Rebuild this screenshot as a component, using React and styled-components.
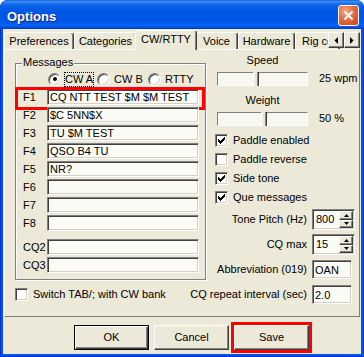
import styled, { createGlobalStyle } from "styled-components";

const GlobalStyle = createGlobalStyle`
  * { box-sizing: border-box; }
  html, body { margin: 0; padding: 0; background: #ffffff; }
  body {
    font-family: "Liberation Sans", Arial, sans-serif;
    font-size: 11px;
    color: #000000;
  }
`;

// classic 3D edges
const sunkenEdge = `
  border: 1px solid;
  border-color: #808080 #ffffff #ffffff #808080;
  box-shadow: inset 1px 1px 0 #404040, inset -1px -1px 0 #d4d0c8;
`;

const raisedEdge = `
  border: 1px solid;
  border-color: #ffffff #404040 #404040 #ffffff;
  box-shadow: inset -1px -1px 0 #808080;
`;

const Window = styled.div`
  width: 364px;
  height: 357px;
  display: flex;
  flex-direction: column;
  background: #0055e5;
  border-radius: 8px 8px 0 0;
  overflow: hidden;
  box-shadow: inset 1px 0 0 #0831d9, inset -1px 0 0 #0831d9, inset 0 -1px 0 #0831d9;
`;

const TitleBar = styled.div`
  height: 29px;
  flex: none;
  display: flex;
  align-items: flex-start;
  justify-content: space-between;
  padding: 0 5px 0 7px;
  border-radius: 8px 8px 0 0;
  background: linear-gradient(
    180deg,
    #0a5bd8 0%,
    #3d8ff7 4%,
    #2a7cf0 9%,
    #0a62e8 18%,
    #0055e3 45%,
    #0058ea 75%,
    #0a63f2 88%,
    #0049d9 96%,
    #0039bd 100%
  );
`;

const TitleText = styled.span`
  margin-top: 9px;
  color: #ffffff;
  font-weight: bold;
  font-size: 13px;
  line-height: 15px;
  text-shadow: 1px 1px 0 #0f1f8a;
`;

const CloseButton = styled.div`
  margin-top: 5px;
  width: 21px;
  height: 21px;
  border: 1px solid #ffffff;
  border-radius: 3px;
  display: flex;
  align-items: center;
  justify-content: center;
  background: radial-gradient(circle at 35% 30%, #f4ab8c 0%, #e46c43 45%, #c8401c 100%);
`;

const Client = styled.div`
  flex: 1;
  margin: 0 3px 3px;
  background: #ece9d8;
  display: flex;
  flex-direction: column;
`;

const TabStrip = styled.div`
  position: relative;
  z-index: 1;
  height: 20px;
  flex: none;
  display: flex;
  align-items: flex-end;
  padding-left: 1px;
`;

const Tab = styled.div`
  position: relative;
  z-index: ${(p) => (p.$active ? 2 : 1)};
  flex: none;
  width: ${(p) => p.$width}px;
  height: ${(p) => (p.$active ? 20 : 17)}px;
  margin: 0 ${(p) => (p.$active ? -2 : 0)}px ${(p) => (p.$active ? -1 : 0)}px;
  padding: 0 0 ${(p) => (p.$active ? 3 : 0)}px ${(p) => (p.$clip ? 6 : 0)}px;
  display: flex;
  align-items: center;
  justify-content: ${(p) => (p.$clip ? "flex-start" : "center")};
  background: #ece9d8;
  border: 1px solid;
  border-color: #ffffff #404040 transparent #ffffff;
  border-bottom: none;
  border-radius: 3px 3px 0 0;
  box-shadow: inset -1px 0 0 #808080;
  line-height: 13px;
  white-space: nowrap;
  overflow: hidden;
`;

const TabScroller = styled.div`
  position: absolute;
  z-index: 3;
  right: 1px;
  top: 3px;
  display: flex;
`;

const ScrollButton = styled.div`
  width: 16px;
  height: 16px;
  background: #ece9d8;
  ${raisedEdge}
  display: flex;
  align-items: center;
  justify-content: center;
`;

const TabPanel = styled.div`
  flex: none;
  height: 268px;
  margin: 0 1px;
  display: flex;
  flex-direction: column;
  border: 1px solid;
  border-color: #ffffff #808080 #808080 #ffffff;
`;

const TopArea = styled.div`
  height: 232px;
  flex: none;
  display: flex;
`;

const GroupBox = styled.div`
  position: relative;
  flex: none;
  width: 191px;
  height: 217px;
  margin: 13px 0 0 10px;
  padding-top: 6px;
  display: flex;
  flex-direction: column;
  border: 1px solid #808080;
  box-shadow: inset 1px 1px 0 #ffffff, 1px 1px 0 #ffffff;
`;

const GroupLegend = styled.span`
  position: absolute;
  top: -8px;
  left: 6px;
  padding: 0 1px;
  line-height: 13px;
  background: #ece9d8;
`;

const RadioRow = styled.div`
  height: 18px;
  display: flex;
  align-items: center;
  padding-left: 32px;
`;

const RadioItem = styled.div`
  flex: none;
  width: ${(p) => (p.$width ? `${p.$width}px` : "auto")};
  display: flex;
  align-items: center;
`;

const RadioCircle = styled.span`
  position: relative;
  flex: none;
  width: 13px;
  height: 13px;
  margin-right: 3px;
  border-radius: 50%;
  background: #ffffff;
  ${sunkenEdge}

  &::after {
    content: "";
    display: ${(p) => (p.$checked ? "block" : "none")};
    position: absolute;
    left: 3.5px;
    top: 3.5px;
    width: 4px;
    height: 4px;
    border-radius: 50%;
    background: #000000;
  }
`;

const RadioText = styled.span`
  line-height: 13px;
  border: 1px dotted ${(p) => (p.$focused ? "#000000" : "transparent")};
`;

const MsgRow = styled.div`
  position: relative;
  height: 18px;
  flex: none;
  display: flex;
  align-items: center;
  padding-left: 7px;
`;

const KeyLabel = styled.span`
  width: 24px;
  flex: none;
  line-height: 13px;
`;

const TextField = styled.input`
  width: ${(p) => p.$width}px;
  height: ${(p) => p.$height}px;
  flex: none;
  margin: 0;
  padding: 0 2px;
  font: inherit;
  color: #000000;
  background: #fbfbf6;
  outline: none;
  ${sunkenEdge}
`;

const GroupGap = styled.div`
  height: 6px;
  flex: none;
`;

const Highlight = styled.div`
  position: absolute;
  left: ${(p) => p.$left}px;
  top: ${(p) => p.$top}px;
  width: ${(p) => p.$width}px;
  height: ${(p) => p.$height}px;
  border: 3px solid #ff0000;
  pointer-events: none;
`;

const RightColumn = styled.div`
  flex: 1;
  display: flex;
  flex-direction: column;
`;

const SliderCaption = styled.div`
  width: 91px;
  margin: ${(p) => p.$top}px 0 0 11px;
  text-align: center;
  line-height: 13px;
`;

const SliderRow = styled.div`
  margin-top: 5px;
  padding-left: 11px;
  display: flex;
  align-items: flex-start;
`;

const Track = styled.div`
  width: 91px;
  height: 14px;
  flex: none;
  display: flex;
  background: #f7f7f2;
  border: 1px solid;
  border-color: #808080 #ffffff #ffffff #808080;
`;

const Thumb = styled.div`
  width: 6px;
  margin: -1px 0 -1px ${(p) => p.$pos}px;
  background: #ece9d8;
  border-left: 1px solid #ffffff;
  border-right: 1px solid #404040;
  box-shadow: inset -1px 0 0 #808080;
`;

const ValueText = styled.span`
  margin-left: 11px;
  line-height: 12px;
`;

const CheckList = styled.div`
  margin-top: 5px;
  display: flex;
  flex-direction: column;
`;

const CheckRow = styled.div`
  height: ${(p) => p.$height || 19}px;
  display: flex;
  align-items: center;
  gap: 5px;
  padding-left: ${(p) => p.$indent}px;
  line-height: 13px;
`;

const CheckBox = styled.span`
  width: 13px;
  height: 13px;
  flex: none;
  display: flex;
  background: #ffffff;
  ${sunkenEdge}
`;

const FieldRow = styled.div`
  height: 25px;
  display: flex;
  align-items: center;
  justify-content: flex-end;
`;

const FieldLabel = styled.span`
  margin-right: 5px;
  line-height: 13px;
  white-space: nowrap;
`;

const ControlBox = styled.div`
  width: 47px;
  flex: none;
  display: flex;
`;

const Spin = styled.div`
  width: 43px;
  height: 21px;
  display: flex;
  background: #fbfbf6;
  ${sunkenEdge}
`;

const SpinValue = styled.span`
  flex: 1;
  padding-left: 3px;
  line-height: 18px;
`;

const SpinButtons = styled.div`
  width: 15px;
  flex: none;
  display: flex;
  flex-direction: column;
  padding: 1px 1px 1px 0;
`;

const SpinButton = styled.div`
  flex: 1;
  display: flex;
  align-items: center;
  justify-content: center;
  background: #ece9d8;
  ${raisedEdge}
`;

const BottomRow = styled.div`
  height: 25px;
  flex: none;
  display: flex;
  align-items: center;
  justify-content: space-between;
`;

const ButtonRow = styled.div`
  margin-top: 8px;
  padding-left: 71px;
  display: flex;
  gap: 5px;
`;

const Button = styled.div`
  position: relative;
  width: 75px;
  height: 25px;
  display: flex;
  align-items: center;
  justify-content: center;
  background: #ece9d8;
  border: 1px solid;
  border-color: ${(p) => (p.$default ? "#000000" : "#ffffff #404040 #404040 #ffffff")};
  box-shadow: ${(p) =>
    p.$default
      ? "inset 1px 1px 0 #ffffff, inset -1px -1px 0 #404040, inset -2px -2px 0 #808080"
      : "inset -1px -1px 0 #808080"};
  line-height: 13px;
`;

const tabs = [
  { label: "Preferences", width: 70 },
  { label: "Categories", width: 63 },
  { label: "CW/RTTY", width: 62, active: true },
  { label: "Voice", width: 43 },
  { label: "Hardware", width: 57 },
  { label: "Rig control", width: 45, clip: true },
];

const messages = [
  { key: "F1", text: "CQ NTT TEST $M $M TEST", marked: true },
  { key: "F2", text: "$C 5NN$X" },
  { key: "F3", text: "TU $M TEST" },
  { key: "F4", text: "QSO B4 TU" },
  { key: "F5", text: "NR?" },
  { key: "F6", text: "" },
  { key: "F7", text: "" },
  { key: "F8", text: "" },
];

const options = [
  { label: "Paddle enabled", checked: true },
  { label: "Paddle reverse", checked: false },
  { label: "Side tone", checked: true },
  { label: "Que messages", checked: true },
];

function CheckMark() {
  return (
    <svg width="11" height="11" viewBox="0 0 11 11" shapeRendering="crispEdges">
      <path
        transform="translate(2 2)"
        fill="#000"
        d="M6 0h1v1h-1z M5 1h2v1h-2z M0 2h1v1h-1z M4 2h3v1h-3z M0 3h2v1h-2z M3 3h3v1h-3z M0 4h5v1h-5z M1 5h3v1h-3z M2 6h1v1h-1z"
      />
    </svg>
  );
}

function Check({ checked }) {
  return <CheckBox>{checked && <CheckMark />}</CheckBox>;
}

function Arrow({ dir }) {
  const d = {
    left: "M4 0 L4 7 L0.5 3.5 Z",
    right: "M0 0 L0 7 L3.5 3.5 Z",
  }[dir];
  return (
    <svg width="4" height="7" viewBox="0 0 4 7">
      <path d={d} fill="#000" />
    </svg>
  );
}

function SpinArrow({ up }) {
  return (
    <svg width="5" height="3" viewBox="0 0 5 3">
      <path d={up ? "M0 3 L5 3 L2.5 0 Z" : "M0 0 L5 0 L2.5 3 Z"} fill="#000" />
    </svg>
  );
}

function SpinBox({ value }) {
  return (
    <Spin>
      <SpinValue>{value}</SpinValue>
      <SpinButtons>
        <SpinButton>
          <SpinArrow up />
        </SpinButton>
        <SpinButton>
          <SpinArrow />
        </SpinButton>
      </SpinButtons>
    </Spin>
  );
}

export default function App() {
  return (
    <>
      <GlobalStyle />
      <Window>
        <TitleBar>
          <TitleText>Options</TitleText>
          <CloseButton>
            <svg width="11" height="11" viewBox="0 0 11 11">
              <path d="M1.5 1.5 L9.5 9.5 M9.5 1.5 L1.5 9.5" stroke="#fff" strokeWidth="2" />
            </svg>
          </CloseButton>
        </TitleBar>

        <Client>
          <TabStrip>
            {tabs.map((t) => (
              <Tab key={t.label} $width={t.width} $active={t.active} $clip={t.clip}>
                {t.label}
              </Tab>
            ))}
            <TabScroller>
              <ScrollButton>
                <Arrow dir="left" />
              </ScrollButton>
              <ScrollButton>
                <Arrow dir="right" />
              </ScrollButton>
            </TabScroller>
          </TabStrip>

          <TabPanel>
            <TopArea>
              <GroupBox>
                <GroupLegend>Messages</GroupLegend>
                <RadioRow>
                  <RadioItem $width={49}>
                    <RadioCircle $checked />
                    <RadioText $focused>CW A</RadioText>
                  </RadioItem>
                  <RadioItem $width={51}>
                    <RadioCircle />
                    <RadioText>CW B</RadioText>
                  </RadioItem>
                  <RadioItem>
                    <RadioCircle />
                    <RadioText>RTTY</RadioText>
                  </RadioItem>
                </RadioRow>
                {messages.map((m) => (
                  <MsgRow key={m.key}>
                    <KeyLabel>{m.key}</KeyLabel>
                    <TextField $width={152} $height={16} value={m.text} readOnly />
                    {m.marked && <Highlight $left={-1} $top={-1} $width={190} $height={23} />}
                  </MsgRow>
                ))}
                <GroupGap />
                {["CQ2", "CQ3"].map((k) => (
                  <MsgRow key={k}>
                    <KeyLabel>{k}</KeyLabel>
                    <TextField $width={152} $height={16} value="" readOnly />
                  </MsgRow>
                ))}
              </GroupBox>

              <RightColumn>
                <SliderCaption $top={4}>Speed</SliderCaption>
                <SliderRow>
                  <Track>
                    <Thumb $pos={35} />
                  </Track>
                  <ValueText>25 wpm</ValueText>
                </SliderRow>
                <SliderCaption $top={8}>Weight</SliderCaption>
                <SliderRow>
                  <Track>
                    <Thumb $pos={43} />
                  </Track>
                  <ValueText>50 %</ValueText>
                </SliderRow>

                <CheckList>
                  {options.map((o) => (
                    <CheckRow key={o.label} $indent={9}>
                      <Check checked={o.checked} />
                      {o.label}
                    </CheckRow>
                  ))}
                </CheckList>

                <FieldRow>
                  <FieldLabel>Tone Pitch (Hz)</FieldLabel>
                  <ControlBox>
                    <SpinBox value="800" />
                  </ControlBox>
                </FieldRow>
                <FieldRow>
                  <FieldLabel>CQ max</FieldLabel>
                  <ControlBox>
                    <SpinBox value="15" />
                  </ControlBox>
                </FieldRow>
                <FieldRow>
                  <FieldLabel>Abbreviation (019)</FieldLabel>
                  <ControlBox>
                    <TextField $width={40} $height={19} value="OAN" readOnly />
                  </ControlBox>
                </FieldRow>
              </RightColumn>
            </TopArea>

            <BottomRow>
              <CheckRow $indent={10} $height={25}>
                <Check checked={false} />
                Switch TAB/; with CW bank
              </CheckRow>
              <FieldRow>
                <FieldLabel>CQ repeat interval (sec)</FieldLabel>
                <ControlBox>
                  <TextField $width={40} $height={19} value="2.0" readOnly />
                </ControlBox>
              </FieldRow>
            </BottomRow>
          </TabPanel>

          <ButtonRow>
            <Button $default>OK</Button>
            <Button>Cancel</Button>
            <Button>
              Save
              <Highlight $left={-4} $top={-4} $width={81} $height={31} />
            </Button>
          </ButtonRow>
        </Client>
      </Window>
    </>
  );
}
